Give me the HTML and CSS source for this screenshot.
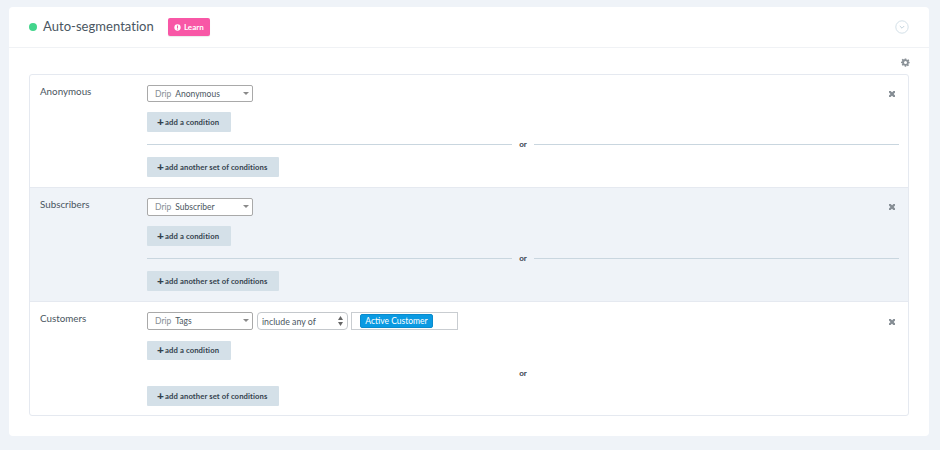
FILE: index.html
```html
<!DOCTYPE html>
<html lang="en">
<head>
<meta charset="utf-8">
<title>Auto-segmentation</title>
<link rel="stylesheet" href="styles.css">
</head>
<body>
<main class="card">
  <header class="card-head">
    <span class="dot"></span>
    <h1 class="title">Auto-segmentation</h1>
    <a class="learn"><svg class="learn-icon" viewBox="0 0 8 8"><circle cx="4" cy="4" r="3.6" fill="#fff"/><rect x="3.4" y="1.7" width="1.2" height="3" fill="#f857a6"/><rect x="3.4" y="5.2" width="1.2" height="1.1" fill="#f857a6"/></svg>Learn</a>
    <svg class="collapse" viewBox="0 0 14 14"><circle cx="7" cy="7" r="6.2" fill="none" stroke="#d3e0e8" stroke-width="1"/><path d="M4.8 6l2.2 2.2L9.2 6" fill="none" stroke="#c3d3dd" stroke-width="1"/></svg>
  </header>
  <div class="card-body">
    <div class="toolbar">
      <svg class="gear" viewBox="0 0 24 24"><path fill="#8b9298" fill-rule="evenodd" d="M10 1h4l.7 3.2 1.9.8 2.8-1.8 2.8 2.8-1.8 2.8.8 1.9L23 10.300v3.400l-2.800.7-.8 1.900 1.800 2.800-2.800 2.800-2.800-1.800-1.900.8L14 23h-4l-.7-3.100-1.900-.8-2.800 1.800-2.800-2.800 1.800-2.800-.8-1.900L0 13.700v-3.400l2.800-.7.800-1.900-1.800-2.800 2.800-2.800 2.800 1.800 1.900-.8zM12 8a4 4 0 1 0 0 8 4 4 0 0 0 0-8z"/></svg>
    </div>
    <section class="segments">
      <div class="segment seg-a">
        <div class="seg-label">Anonymous</div>
        <div class="seg-main">
          <div class="cond-row">
            <div class="select source"><span class="muted">Drip</span><span>Anonymous</span><i class="caret"></i></div>
          </div>
          <a class="btn btn-cond"><b class="plus">+</b>add a condition</a>
          <div class="or or-lined"><span>or</span></div>
          <a class="btn btn-set"><b class="plus">+</b>add another set of conditions</a>
        </div>
        <svg class="remove" viewBox="0 0 6 6"><path d="M.9.900l4.200 4.200M5.100.900L.9 5.100" stroke="#858d94" stroke-width="2.200" stroke-linecap="square"/></svg>
      </div>
      <div class="segment shaded">
        <div class="seg-label">Subscribers</div>
        <div class="seg-main">
          <div class="cond-row">
            <div class="select source"><span class="muted">Drip</span><span>Subscriber</span><i class="caret"></i></div>
          </div>
          <a class="btn btn-cond"><b class="plus">+</b>add a condition</a>
          <div class="or or-lined"><span>or</span></div>
          <a class="btn btn-set"><b class="plus">+</b>add another set of conditions</a>
        </div>
        <svg class="remove" viewBox="0 0 6 6"><path d="M.9.900l4.200 4.200M5.100.900L.9 5.100" stroke="#858d94" stroke-width="2.200" stroke-linecap="square"/></svg>
      </div>
      <div class="segment seg-c">
        <div class="seg-label">Customers</div>
        <div class="seg-main">
          <div class="cond-row">
            <div class="select source"><span class="muted">Drip</span><span>Tags</span><i class="caret"></i></div>
            <div class="select operator"><span>include any of</span><svg class="updown" viewBox="0 0 5 10"><path d="M2.500 0L5 4H0zM2.500 10L0 6h5z" fill="#666"/></svg></div>
            <div class="tag-box"><span class="tag">Active Customer</span></div>
          </div>
          <a class="btn btn-cond"><b class="plus">+</b>add a condition</a>
          <div class="or"><span>or</span></div>
          <a class="btn btn-set"><b class="plus">+</b>add another set of conditions</a>
        </div>
        <svg class="remove" viewBox="0 0 6 6"><path d="M.9.900l4.200 4.200M5.100.900L.9 5.100" stroke="#858d94" stroke-width="2.200" stroke-linecap="square"/></svg>
      </div>
    </section>
  </div>
</main>
</body>
</html>
```
FILE: styles.css
```css
* { box-sizing: border-box; }
html, body { margin: 0; height: 100%; }
body {
  background: #eff3f8;
  padding: 7px 11px 14px 9px;
  font-family: Lato, "Open Sans", sans-serif;
  color: #3d4a55;
  overflow: hidden;
}
.card {
  background: #fff;
  border-radius: 4px;
  height: 429px;
}
.card-head {
  height: 41px;
  display: flex;
  align-items: center;
  padding: 0 20px;
  border-bottom: 1px solid #f0f2f5;
}
.dot {
  width: 8px; height: 8px;
  border-radius: 50%;
  background: #43d58c;
  margin-right: 6px;
  margin-bottom: 1px;
}
.title {
  margin: 0 0 2px;
  font-size: 13px;
  font-weight: 400;
  letter-spacing: .04px;
  color: #4a5661;
}
.learn {
  margin-left: 14px;
  width: 42px; height: 18px;
  background: #f857a6;
  border-radius: 2px;
  color: #fff;
  font-size: 8px;
  font-weight: 700;
  display: flex;
  align-items: center;
  justify-content: center;
  box-shadow: 0 1px 1px rgba(0,0,0,.08);
}
.learn-icon { width: 7px; height: 7px; margin-right: 3px; }
.collapse { width: 14px; height: 14px; margin-left: auto; }
.card-body { padding: 0 20px; }
.toolbar {
  height: 26px;
  display: flex;
  justify-content: flex-end;
  align-items: center;
  padding-top: 1px;
}
.gear { width: 9px; height: 9px; margin-right: -1px; margin-top: 1px; }
.segments {
  border: 1px solid #e5e9f0;
  border-radius: 3px;
  height: 342px;
}
.segment {
  display: flex;
  height: 114px;
  padding: 10px 10px 0;
  border-bottom: 1px solid #e5e9f0;
}
.seg-a { height: 113px; }
.seg-c { height: 113px; border-bottom: 0; }
.shaded { background: #eff3f8; }
.seg-label { flex: none; width: 107px; font-size: 9.800px; line-height: 12px; color: #4a5661; }
.seg-main { flex: none; width: 752px; }
.cond-row { display: flex; gap: 4px; height: 18px; }
.seg-a .cond-row { height: 17px; }
.select {
  position: relative;
  display: flex;
  align-items: center;
  height: 100%;
  background: #fff;
  font-size: 8.500px;
  color: #4a5661;
}
.source {
  width: 106px;
  padding-left: 7px;
  gap: 4px;
  border: 1px solid #a9a9a9;
  border-radius: 2px;
}
.operator {
  width: 91px;
  padding-left: 4px;
  border: 1px solid #c4c8cc;
  border-radius: 4px;
  font-size: 8.800px;
}
.muted { color: #878f96; }
.caret {
  position: absolute;
  right: 3px; top: 6px;
  border: 3px solid transparent;
  border-top: 3px solid #8a8a8a;
}
.updown {
  position: absolute;
  right: 4px; top: 3px;
  width: 5px; height: 10px;
}
.tag-box {
  width: 107px;
  height: 18px;
  margin-left: -1px;
  padding: 1px 0 0 8px;
  border: 1px solid #c9cdd1;
  background: #fff;
}
.tag {
  display: block;
  width: 73px;
  height: 14px;
  background: #0a9ae2;
  border: 1px solid #0a8bcd;
  border-radius: 2px;
  color: #fff;
  font-size: 8.500px;
  line-height: 12px;
  text-align: center;
}
.btn {
  display: flex;
  align-items: center;
  height: 20px;
  background: #d4e0e8;
  border-radius: 1px;
  padding: 0 0 1px 10px;
  font-size: 7.700px;
  font-weight: 700;
  color: #34424e;
  letter-spacing: .1px;
}
.btn-cond { width: 84px; margin-top: 10px; }
.seg-c .btn-cond { height: 19px; margin-top: 11px; }
.btn-set { width: 132px; }
.plus { font-size: 12px; font-weight: 900; line-height: 10px; margin-right: 1px; }
.or {
  height: 25px;
  display: flex;
  align-items: center;
  justify-content: center;
  gap: 7px;
  padding-bottom: 1px;
  font-size: 8px;
  font-weight: 700;
  color: #34424e;
}
.seg-c .or { height: 26px; }
.or-lined::before, .or-lined::after {
  content: "";
  flex: 1;
  height: 1px;
  background: #c9d6df;
}
.remove {
  flex: none;
  width: 6px;
  height: 6px;
  margin-left: -10px;
  margin-top: 6px;
}
.seg-c .remove { margin-top: 7px; }
```
